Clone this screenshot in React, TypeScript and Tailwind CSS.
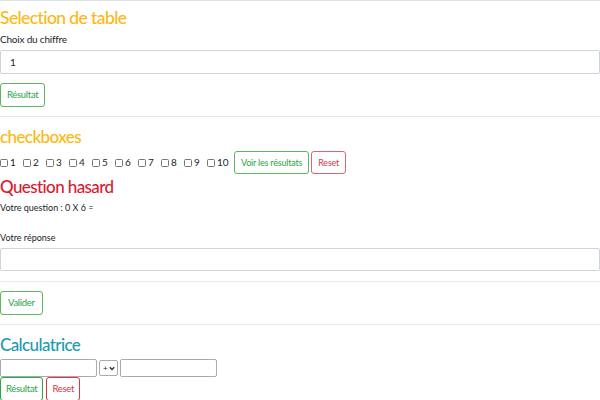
import React, { useState } from 'react';

const font = { fontFamily: 'Lato, "Noto Sans", sans-serif' };

export default function App() {
  const [choice, setChoice] = useState('1');
  const nums = [1, 2, 3, 4, 5, 6, 7, 8, 9, 10];

  return (
    <div className="w-[600px] h-[400px] overflow-hidden bg-white text-[#212529] border-t border-[#dee2e6]" style={font}>
      {/* Selection de table */}
      <div className="pt-[4px]">
        <h2 className="text-[17.5px] leading-[25px] text-[#fdb813] tracking-[-0.6px] font-medium">Selection de table</h2>
        <label className="block text-[10px] leading-[12px] mt-[3px] tracking-[-0.2px]">Choix du chiffre</label>
        <input
          value={choice}
          onChange={(e) => setChoice(e.target.value)}
          className="block w-full h-[24px] mt-[5px] px-[9px] border border-[#ced4da] rounded-[2px] text-[10px] outline-none"
        />
        <div className="flex mt-[9px]">
          <button className="h-[24px] px-[6px] border border-[#5cb85c] rounded-[3px] text-[9.5px] text-[#28a745] tracking-[-0.3px]">
            Résultat
          </button>
        </div>
      </div>
      <div className="mt-[9px] border-t border-[#e5e5e5]" />

      {/* checkboxes */}
      <h2 className="mt-[9px] text-[17px] leading-[22px] text-[#fdb813] tracking-[-0.6px] font-medium">checkboxes</h2>
      <div className="flex items-center h-[23px] mt-[3px]">
        {nums.map((n) => (
          <label key={n} className="flex items-center text-[10px] w-[23px] shrink-0 last:w-[30px]">
            <input
              type="checkbox"
              className="appearance-none w-[8px] h-[8px] m-0 mr-[2px] border border-[#767676] rounded-[1.5px] bg-white"
            />
            {n}
          </label>
        ))}
        <button className="ml-[4px] h-[23px] px-[6px] border border-[#5cb85c] rounded-[3px] text-[9px] text-[#28a745] tracking-[-0.2px]">
          Voir les résultats
        </button>
        <button className="ml-[2px] h-[23px] px-[6px] border border-[#e4606d] rounded-[3px] text-[9px] text-[#dc3545] tracking-[-0.2px]">
          Reset
        </button>
      </div>

      {/* Question hasard */}
      <h2 className="mt-[2px] text-[17px] leading-[22px] text-[#dc1a2e] tracking-[-0.6px] font-medium">Question hasard</h2>
      <p className="text-[9px] leading-[12px] mt-[4px]">Votre question : 0 X 6 =</p>
      <label className="block text-[9px] leading-[12px] mt-[18px]">Votre réponse</label>
      <input className="block w-full h-[23px] mt-[4px] border border-[#ced4da] rounded-[2px] outline-none" />
      <div className="flex mt-[10px] border-t border-b border-[#e9e9e9] pt-[9px] pb-[9px]">
        <button className="h-[24px] px-[7px] border border-[#5cb85c] rounded-[3px] text-[9.5px] text-[#28a745] tracking-[-0.3px]">
          Valider
        </button>
      </div>

      {/* Calculatrice */}
      <h2 className="mt-[9px] text-[17px] leading-[22px] text-[#1a9bb0] tracking-[-0.6px] font-medium">Calculatrice</h2>
      <div className="flex items-center mt-[3px] h-[18px] gap-[2px]">
        <input className="w-[97px] h-[18px] border border-[#aaaaaa] rounded-[2px] outline-none" />
        <div className="relative w-[19px] h-[16px] leading-none">
          <select className="block appearance-none w-full h-[16px] border border-[#aaaaaa] rounded-[2px] text-[8px] leading-none pl-[3px] outline-none bg-white">
            <option>+</option>
          </select>
          <svg className="absolute right-[3px] top-[6px] pointer-events-none" width="6" height="5" viewBox="0 0 6 5">
            <path d="M0.8 1.2 L3 3.6 L5.2 1.2" fill="none" stroke="#222" strokeWidth="1.3" />
          </svg>
        </div>
        <input className="w-[97px] h-[18px] border border-[#aaaaaa] rounded-[2px] outline-none" />
      </div>
      <div className="flex gap-[3px]">
        <button className="h-[24px] px-[5px] border border-[#28a745] rounded-[3px] text-[9.5px] text-[#28a745] tracking-[-0.3px]">
          Résultat
        </button>
        <button className="h-[24px] px-[5px] border border-[#dc3545] rounded-[3px] text-[9.5px] text-[#dc3545] tracking-[-0.3px]">
          Reset
        </button>
      </div>
    </div>
  );
}
